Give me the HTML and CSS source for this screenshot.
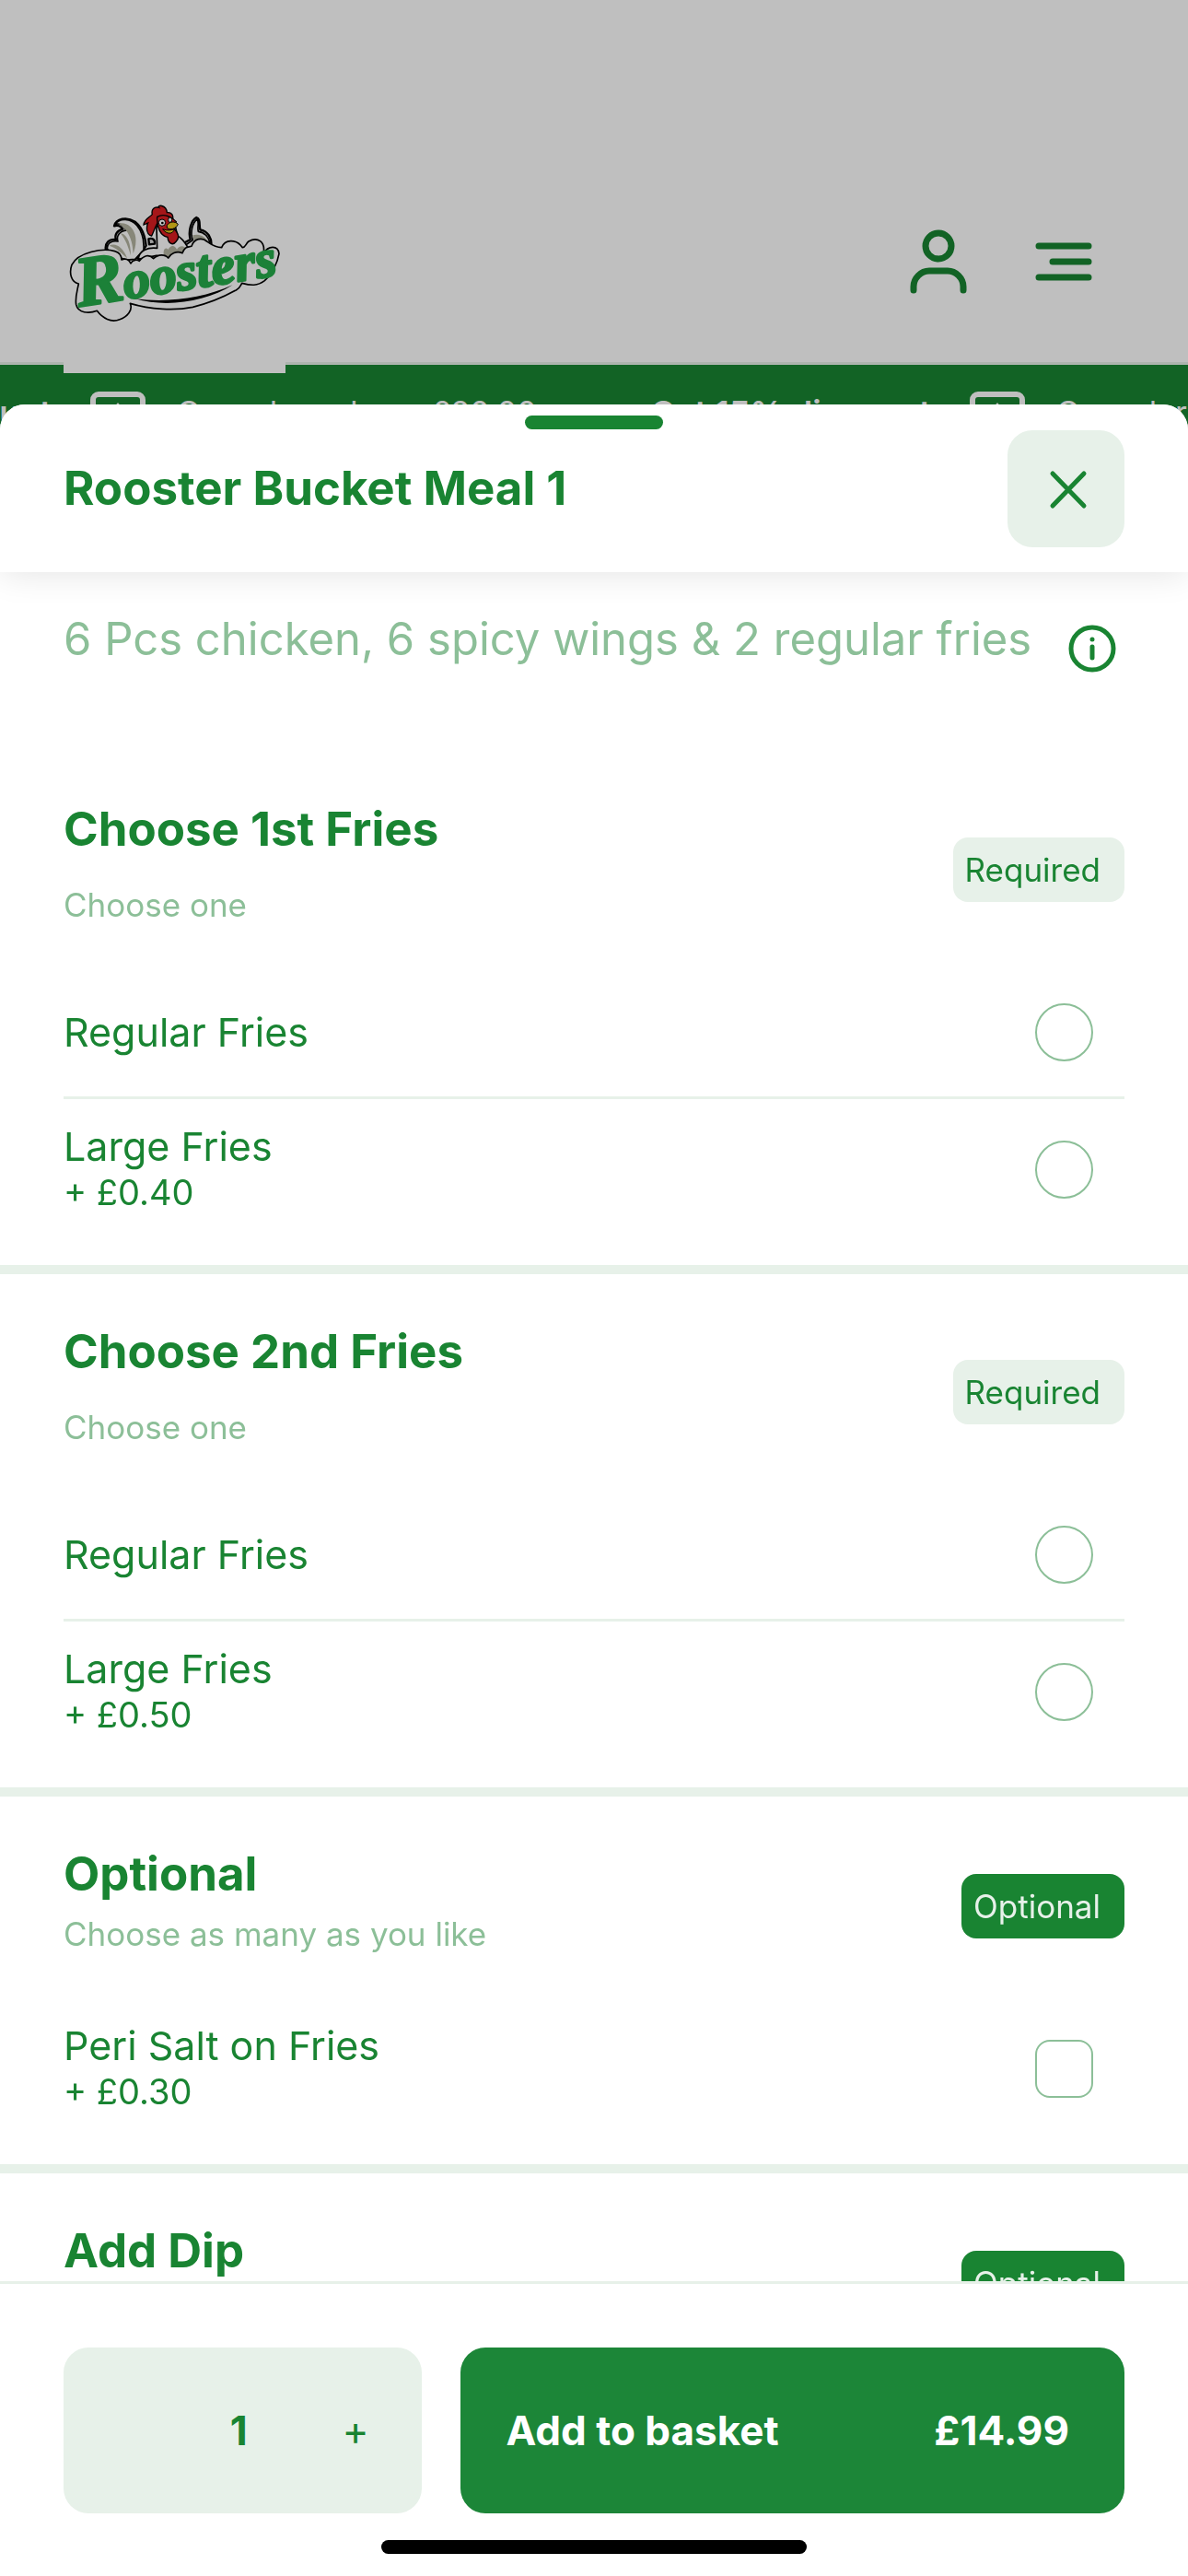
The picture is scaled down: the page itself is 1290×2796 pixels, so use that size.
FILE: index.html
```html
<!DOCTYPE html>
<html lang="en">
<head>
  <meta charset="utf-8">
  <meta name="viewport" content="width=device-width, initial-scale=1">
  <title>Roosters - Rooster Bucket Meal 1</title>
  <link rel="stylesheet" href="styles.css">
</head>
<body>
  <header class="site-header">
    <a href="#" class="logo" aria-label="Roosters home">
      <svg viewBox="57 0 723 615">
        <!-- tail -->
        <path class="halo" d="M195 216C190 190 205 178 228 180C222 165 232 150 250 146C244 136 232 132 222 136C228 112 262 104 290 122C310 138 322 160 326 200L300 240L262 246Z"/>
        <path class="feather" d="M200 212C196 194 212 182 234 186C228 168 240 152 262 150C256 134 240 126 226 130C240 108 276 112 296 134C314 154 320 178 318 214L290 244L262 246L232 236Z"/>
        <path class="shade" d="M236 128C262 122 282 138 290 164C296 186 290 210 284 226C282 196 276 152 236 128ZM242 160C262 162 276 186 276 232C268 204 258 176 242 160ZM206 200C226 190 250 204 264 240C246 226 228 206 206 200Z"/>
        <!-- wing with the thumb up -->
        <path class="halo" d="M440 196L470 180C462 150 474 116 490 108C504 112 498 132 502 148C526 152 542 174 538 206L490 214Z"/>
        <path class="feather" d="M446 204L478 182C468 156 478 124 492 114C500 124 492 140 496 154C518 156 534 176 534 200L490 212Z"/>
        <path class="shade" d="M478 166C496 160 516 168 526 184C510 176 494 176 482 182Z"/>
        <!-- body -->
        <path class="feather" d="M300 244C304 216 332 204 362 208L360 140C380 104 420 116 424 150L428 168C446 176 456 196 466 212L440 232L398 240L360 232Z"/>
        <path class="shade" d="M384 232C380 214 388 202 398 212C406 196 420 198 426 212C438 196 452 202 458 212L436 234L400 242Z"/>
        <path class="halo" d="M334 178C346 174 356 180 354 194L336 196Z"/>
        <!-- comb and head -->
        <path class="comb" d="M344 168C326 164 326 140 332 126L318 132C320 112 338 108 346 98C342 82 352 72 368 76C360 66 392 66 394 92C412 90 416 104 412 122L390 116C360 112 358 140 344 168Z"/>
        <path class="comb" d="M362 106C384 94 410 106 424 122L416 144C430 158 436 174 424 186C412 202 398 192 396 172C374 170 360 140 362 106Z"/>
        <circle class="eye" cx="378" cy="125" r="11"/>
        <circle cx="379" cy="126" r="4"/>
        <ellipse class="eye" cx="404" cy="116" rx="6" ry="8"/>
        <path class="beak" d="M394 134C402 120 420 120 430 130C424 146 404 150 394 142Z"/>
        <path class="beak" d="M380 146C394 152 408 150 418 146C414 164 392 164 380 146Z"/>
        <!-- cloud round the name -->
        <path class="cloud" d="M106 324C82 318 74 290 84 262C104 222 184 206 224 218C238 222 246 232 246 246C258 240 270 244 276 258C282 246 296 244 304 250C318 232 336 226 350 242C366 226 388 228 398 240C406 226 424 216 444 224C454 200 462 206 474 202C482 176 508 172 524 186C536 194 548 206 572 206C582 180 618 176 640 206C650 206 650 194 660 186C688 170 716 186 708 226C724 198 756 198 759 226C754 254 738 292 712 314C688 332 668 330 638 322C632 332 632 338 620 344C570 372 528 388 478 400C420 412 340 408 274 388C284 410 264 432 240 440C212 452 184 436 166 412C140 422 104 420 98 392C94 368 102 346 106 324Z"/>
        <text class="logo-text" transform="translate(108 398) rotate(-9)"><tspan class="logo-initial">R</tspan>oosters</text>
        <path d="M290 373C400 386 510 372 608 328C520 384 390 402 290 373Z"/>
      </svg>
    </a>
    <nav class="header-nav">
      <button type="button" class="icon-btn" aria-label="Account">
        <svg width="76" height="76" viewBox="0 0 76 76">
          <circle cx="38" cy="21" r="14"/>
          <path d="M11 69V65C11 56 19 48 28 48H48C57 48 65 56 65 65V69"/>
        </svg>
      </button>
      <button type="button" class="icon-btn" aria-label="Menu">
        <svg width="76" height="76" viewBox="0 0 76 76">
          <path d="M11 21H65M26 38H65M11 55H65"/>
        </svg>
      </button>
    </nav>
  </header>

  <div class="offers">
    <div class="offers-track">
      <div class="offer">
        <svg class="offer-icon" viewBox="0 0 60 60"><rect x="3" y="3" width="54" height="54" rx="6"/><path d="M30 12L40 24H20Z"/></svg>
        <span>On orders above £20.00</span>
        <strong>Get 15% discount</strong>
      </div>
      <div class="offer">
        <svg class="offer-icon" viewBox="0 0 60 60"><rect x="3" y="3" width="54" height="54" rx="6"/><path d="M30 12L40 24H20Z"/></svg>
        <span>On orders above £20.00</span>
        <strong>Get 15% discount</strong>
      </div>
      <div class="offer">
        <svg class="offer-icon" viewBox="0 0 60 60"><rect x="3" y="3" width="54" height="54" rx="6"/><path d="M30 12L40 24H20Z"/></svg>
        <span>On orders above £20.00</span>
        <strong>Get 15% discount</strong>
      </div>
    </div>
  </div>

  <div class="overlay"></div>

  <main class="sheet" role="dialog" aria-labelledby="itemTitle">
    <div class="sheet-handle"></div>
    <div class="sheet-header">
      <h1 id="itemTitle">Rooster Bucket Meal 1</h1>
      <button type="button" class="close-btn" aria-label="Close">
        <svg width="46" height="46" viewBox="0 0 46 46"><path d="M6 6L40 41M40 6L6 41"/></svg>
      </button>
    </div>

    <form class="sheet-body" id="itemForm">
      <div class="description">
        <p>6 Pcs chicken, 6 spicy wings &amp; 2 regular fries</p>
        <button type="button" class="info-btn" aria-label="Item information">
          <svg width="52" height="52" viewBox="0 0 52 52">
            <circle cx="26" cy="26" r="23"/>
            <path d="M26 24V36M26 16V16"/>
          </svg>
        </button>
      </div>

      <section class="group">
        <div class="group-header">
          <div>
            <h2>Choose 1st Fries</h2>
            <p class="hint">Choose one</p>
          </div>
          <span class="badge">Required</span>
        </div>
        <label class="option">
          <span class="option-text">Regular Fries</span>
          <input type="radio" name="fries1" value="regular">
        </label>
        <label class="option">
          <span class="option-text">Large Fries<span class="price">+ £0.40</span></span>
          <input type="radio" name="fries1" value="large">
        </label>
      </section>

      <section class="group">
        <div class="group-header">
          <div>
            <h2>Choose 2nd Fries</h2>
            <p class="hint">Choose one</p>
          </div>
          <span class="badge">Required</span>
        </div>
        <label class="option">
          <span class="option-text">Regular Fries</span>
          <input type="radio" name="fries2" value="regular">
        </label>
        <label class="option">
          <span class="option-text">Large Fries<span class="price">+ £0.50</span></span>
          <input type="radio" name="fries2" value="large">
        </label>
      </section>

      <section class="group group-optional">
        <div class="group-header">
          <div>
            <h2>Optional</h2>
            <p class="hint">Choose as many as you like</p>
          </div>
          <span class="badge">Optional</span>
        </div>
        <label class="option">
          <span class="option-text">Peri Salt on Fries<span class="price">+ £0.30</span></span>
          <input type="checkbox" name="extras" value="peri-salt">
        </label>
      </section>

      <section class="group group-optional">
        <div class="group-header">
          <div>
            <h2>Add Dip</h2>
            <p class="hint">Choose as many as you like</p>
          </div>
          <span class="badge">Optional</span>
        </div>
      </section>
    </form>

    <footer class="sheet-footer">
      <div class="quantity">
        <button type="button" aria-label="Decrease quantity" disabled></button>
        <output>1</output>
        <button type="button" aria-label="Increase quantity">+</button>
      </div>
      <button type="submit" form="itemForm" class="basket-btn">
        <span>Add to basket</span>
        <span>£14.99</span>
      </button>
      <div class="home-indicator"></div>
    </footer>
  </main>
</body>
</html>
```

FILE: styles.css
```css
:root {
  --green: #198432;
  --green-mid: #8cbf98;
  --green-light: #e7f1e9;
  --side: 69px;
}

* {
  box-sizing: border-box;
}

body {
  margin: 0;
  min-height: 100vh;
  background: #fff;
  color: var(--green);
  font-family: Inter, "Liberation Sans", sans-serif;
  overflow: hidden;
}

h1, h2, p {
  margin: 0;
}

button {
  padding: 0;
  border: none;
  background: none;
  color: inherit;
  font-family: inherit;
  cursor: pointer;
}

svg {
  display: block;
}

/* Page behind the sheet */
.site-header {
  display: flex;
  justify-content: space-between;
  align-items: flex-start;
  height: 396px;
  padding: 200px 97px 0 var(--side);
  border-bottom: 3px solid var(--green-light);
}

.logo {
  position: relative;
  width: 241px;
  height: 205px;
  background: #fff;
}

.logo svg {
  width: 241px;
  height: 205px;
}

.logo .cloud,
.logo .feather,
.logo .halo {
  fill: #fff;
  stroke: #000;
  stroke-width: 5;
  stroke-linejoin: round;
}

.logo .halo {
  fill: #d8d8d8;
  stroke-width: 7;
}

.logo .shade {
  fill: #b5b5a2;
}

.logo .comb {
  fill: #dc1e22;
  stroke: #000;
  stroke-width: 4;
}

.logo .beak {
  fill: #ecc91c;
  stroke: #000;
  stroke-width: 3;
}

.logo .eye {
  fill: #fff;
  stroke: #000;
  stroke-width: 3;
}

.logo-text {
  fill: #26ac4b;
  stroke: #26ac4b;
  stroke-width: 8;
  stroke-linejoin: round;
  font-family: "Liberation Serif", serif;
  font-size: 174px;
  font-style: italic;
  font-weight: 700;
}

.logo-initial {
  font-size: 230px;
}

.header-nav {
  display: flex;
  gap: 60px;
  padding-top: 46px;
}

.icon-btn svg,
.close-btn svg,
.info-btn svg {
  fill: none;
  stroke: var(--green);
  stroke-width: 7;
  stroke-linecap: round;
}

.offers {
  height: 90px;
  background: var(--green);
  color: #fff;
  overflow: hidden;
}

.offers-track {
  display: flex;
  padding-top: 29px;
  transform: translateX(-857px);
}

.offer {
  display: flex;
  flex: 0 0 955px;
  font-size: 34px;
  line-height: 46px;
  white-space: nowrap;
}

.offer strong {
  margin-left: auto;
  padding-right: 42px;
  font-size: 36px;
  font-weight: 600;
}

.offer-icon {
  width: 60px;
  height: 60px;
  margin-right: 34px;
  fill: #fff;
}

.offer-icon rect {
  fill: none;
  stroke: #fff;
  stroke-width: 6;
}

.overlay {
  position: fixed;
  inset: 0;
  background: rgba(0, 0, 0, 0.25);
}

/* Bottom sheet */
.sheet {
  position: fixed;
  inset: 439px 0 0;
  display: flex;
  flex-direction: column;
  background: #fff;
  border-radius: 27px 27px 0 0;
  overflow: hidden;
}

.sheet-handle {
  position: absolute;
  top: 12px;
  left: 50%;
  z-index: 2;
  width: 150px;
  height: 15px;
  margin-left: -75px;
  border-radius: 8px;
  background: var(--green);
}

.sheet-header {
  position: relative;
  z-index: 1;
  display: flex;
  flex-shrink: 0;
  justify-content: space-between;
  align-items: center;
  height: 182px;
  padding: 0 var(--side);
  background: #fff;
  box-shadow: 0 0 36px rgba(0, 0, 0, 0.12);
}

h1, h2 {
  font-size: 51px;
  font-weight: 700;
  line-height: 60px;
}

.close-btn {
  display: flex;
  justify-content: center;
  align-items: center;
  width: 127px;
  height: 127px;
  padding: 2px 0 0 4px;
  border-radius: 27px;
  background: var(--green-light);
}

.close-btn svg {
  stroke-width: 5;
}

.sheet-body {
  flex: 1;
  min-height: 0;
  overflow: hidden;
}

.description {
  display: flex;
  justify-content: space-between;
  padding: 43px var(--side) 72px;
}

.description p {
  color: var(--green-mid);
  font-size: 49px;
  line-height: 60px;
  white-space: nowrap;
}

.info-btn {
  display: flex;
  justify-content: center;
  align-items: center;
  flex-shrink: 0;
  width: 70px;
  height: 80px;
}

.info-btn svg {
  stroke-width: 5;
}

.group {
  padding: 54px var(--side) 28px;
  border-bottom: 10px solid var(--green-light);
}

.group-header {
  display: flex;
  justify-content: space-between;
  align-items: center;
  padding-bottom: 33px;
}

.hint {
  padding: 31px 0 14px;
  color: var(--green-mid);
  font-size: 35px;
  line-height: 42px;
}

.badge {
  padding: 14px 26px 14px 13px;
  border-radius: 16px;
  background: var(--green-light);
  font-size: 35px;
  line-height: 42px;
}

.option {
  display: flex;
  justify-content: space-between;
  align-items: center;
  min-height: 140px;
  padding: 26px 34px 26px 0;
}

.option + .option {
  border-top: 3px solid var(--green-light);
}

.option-text {
  font-size: 43px;
  line-height: 50px;
}

.price {
  display: block;
  font-size: 38px;
}

.option input {
  appearance: none;
  width: 63px;
  height: 63px;
  margin: 0;
  border: 2px solid var(--green-mid);
  border-radius: 50%;
}

.option input[type="checkbox"] {
  border-radius: 16px;
}

.option input:checked {
  background: var(--green);
}

.group-optional .group-header {
  padding-bottom: 35px;
}

.group-optional .hint {
  padding-top: 14px;
}

.group-optional .badge {
  background: var(--green);
  color: var(--green-light);
}

.sheet-footer {
  position: relative;
  display: grid;
  grid-template-columns: 7fr 13fr;
  flex-shrink: 0;
  gap: 42px;
  padding: 69px var(--side) 68px;
  border-top: 3px solid var(--green-light);
  background: #fff;
}

.quantity,
.basket-btn {
  height: 180px;
  border-radius: 27px;
}

.quantity {
  display: grid;
  grid-template-columns: repeat(3, 1fr);
  align-items: center;
  padding-right: 8px;
  background: var(--green-light);
  font-size: 44px;
  text-align: center;
}

.quantity button {
  height: 100%;
  font-size: 44px;
}

.quantity output {
  font-weight: 700;
}

.basket-btn {
  display: flex;
  justify-content: space-between;
  align-items: center;
  padding: 0 60px 0 50px;
  background: #1c8638;
  color: #fff;
  font-size: 44px;
  font-weight: 700;
}

.home-indicator {
  position: absolute;
  bottom: 24px;
  left: 50%;
  width: 462px;
  height: 15px;
  margin-left: -231px;
  border-radius: 8px;
  background: #000;
}
```
